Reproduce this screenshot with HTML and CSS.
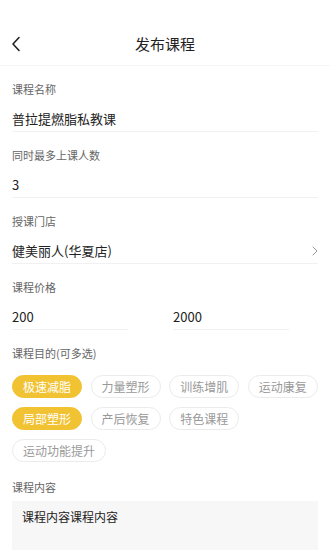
FILE: index.html
```html
<!DOCTYPE html>
<html lang="zh">
<head>
<meta charset="utf-8">
<link rel="stylesheet" href="styles.css">
</head>
<body>
<div class="page">
  <header class="header">
    <span class="back">
      <svg width="10" height="16" viewBox="0 0 10 16"><polyline points="8,1.5 2,8 8,14.5" fill="none" stroke="#222" stroke-width="1.6" stroke-linecap="round" stroke-linejoin="round"/></svg>
    </span>
    <h1 class="title">发布课程</h1>
  </header>
  <main class="form">
    <div class="field">
      <div class="label">课程名称</div>
      <div class="value">普拉提燃脂私教课</div>
    </div>
    <div class="field">
      <div class="label">同时最多上课人数</div>
      <div class="value">3</div>
    </div>
    <div class="field">
      <div class="label">授课门店</div>
      <div class="value row">
        <span>健美丽人(华夏店)</span>
        <svg class="arrow" width="6" height="10" viewBox="0 0 6 10"><polyline points="1,1 5,5 1,9" fill="none" stroke="#999" stroke-width="1" stroke-linecap="round" stroke-linejoin="round"/></svg>
      </div>
    </div>
    <div class="field nob">
      <div class="label">课程价格</div>
      <div class="prices">
        <div class="value price">200</div>
        <div class="value price">2000</div>
      </div>
    </div>
    <div class="section">
      <div class="label">课程目的(可多选)</div>
      <div class="tags">
        <span class="tag on">极速减脂</span>
        <span class="tag">力量塑形</span>
        <span class="tag">训练增肌</span>
        <span class="tag">运动康复</span>
        <span class="tag on">局部塑形</span>
        <span class="tag">产后恢复</span>
        <span class="tag">特色课程</span>
        <span class="tag">运动功能提升</span>
      </div>
    </div>
    <div class="section content">
      <div class="label">课程内容</div>
      <div class="textarea">课程内容课程内容</div>
    </div>
  </main>
</div>
</body>
</html>
```

FILE: styles.css
```css
* { box-sizing: border-box; margin: 0; padding: 0; }
html, body { background: #fff; }
body {
  font-family: "Noto Sans CJK SC", "Noto Sans", sans-serif;
  color: #333;
  overflow: hidden;
}
.page { width: 330px; height: 550px; overflow: hidden; }
.header {
  height: 66px;
  padding-top: 22px;
  display: flex;
  align-items: center;
  justify-content: center;
  position: relative;
  border-bottom: 1px solid #f5f5f5;
}
.back {
  position: absolute;
  left: 11px;
  top: 36px;
  display: flex;
}
.title {
  font-size: 15px;
  font-weight: 400;
  color: #222;
  line-height: 20px;
}
.form { padding: 0 12px; }
.field {
  padding-top: 15px;
  padding-bottom: 2px;
  border-bottom: 1px solid #f1f1f1;
}
.field.nob { border-bottom: none; padding-bottom: 0; }
.label {
  font-size: 11px;
  line-height: 16px;
  color: #666;
}
.value {
  margin-top: 12px;
  font-size: 13px;
  line-height: 20px;
  color: #222;
}
.row {
  display: flex;
  justify-content: space-between;
  align-items: center;
}
.arrow { margin-right: 0; }
.prices {
  display: grid;
  grid-template-columns: 116px 116px;
  column-gap: 45px;
  margin-top: 12px;
}
.price {
  margin-top: 0;
  padding-bottom: 2px;
  border-bottom: 1px solid #f1f1f1;
}
.section { padding-top: 15px; }
.tags {
  margin-top: 14px;
  display: flex;
  flex-wrap: wrap;
  row-gap: 9px;
  column-gap: 8.6px;
}
.tag {
  height: 23px;
  padding: 0 10px;
  border: 1px solid #ebebeb;
  border-radius: 12px;
  font-size: 12px;
  line-height: 21px;
  color: #999;
  white-space: nowrap;
}
.tag.on {
  background: #f1c232;
  border-color: #f1c232;
  color: #fff;
}
.content { padding-top: 17px; }
.textarea {
  margin-top: 6px;
  height: 110px;
  background: #f7f7f7;
  padding: 6px 10px;
  font-size: 12px;
  line-height: 20px;
  color: #222;
}
```
